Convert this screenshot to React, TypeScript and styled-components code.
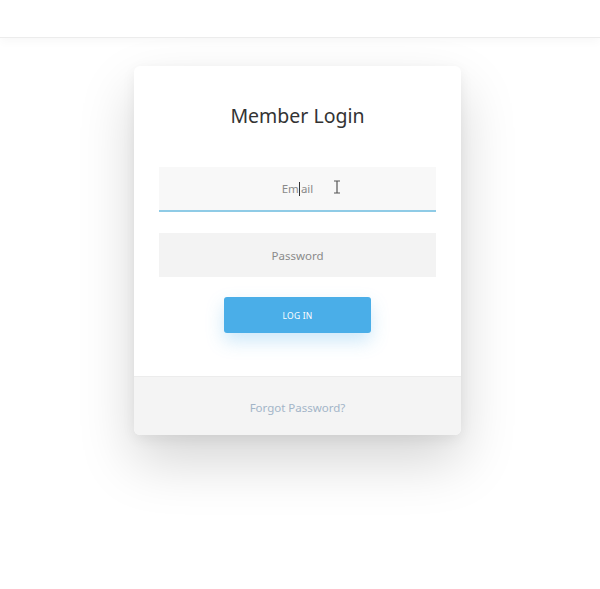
import React from "react";
import styled, { createGlobalStyle } from "styled-components";

const Global = createGlobalStyle`
  html, body { margin: 0; padding: 0; background: #ffffff; }
  body { font-family: "Noto Sans", "Open Sans", sans-serif; }
  * { box-sizing: border-box; }
`;

const Page = styled.div`
  width: 600px;
  height: 589px;
  background: #ffffff;
  overflow: hidden;
  display: flex;
  flex-direction: column;
`;

const TopBar = styled.header`
  height: 38px;
  flex-shrink: 0;
  background: #ffffff;
  border-bottom: 1px solid #ececec;
  box-shadow: 0 3px 10px rgba(0, 0, 0, 0.035);
  position: relative;
  z-index: 1;
`;

const Main = styled.main`
  display: flex;
  justify-content: center;
  padding: 28px 5px 0 0;
`;

const Card = styled.section`
  width: 327px;
  background: #ffffff;
  border-radius: 6px;
  overflow: hidden;
  box-shadow: 0 26px 55px rgba(0, 0, 0, 0.17), 0 4px 14px rgba(0, 0, 0, 0.06);
`;

const Body = styled.div`
  padding: 37px 25px 43px;
  display: flex;
  flex-direction: column;
  align-items: center;
`;

const Title = styled.h1`
  margin: 0 0 38px;
  font-family: "Noto Sans", sans-serif;
  font-weight: 400;
  font-size: 19.5px;
  line-height: 26px;
  color: #333333;
`;

const Field = styled.div<{ $focused?: boolean }>`
  position: relative;
  width: 100%;
  height: ${(p) => (p.$focused ? 45 : 44)}px;
  margin-bottom: ${(p) => (p.$focused ? 21 : 20)}px;
  background: ${(p) => (p.$focused ? "#f8f8f8" : "#f3f3f3")};
  border-bottom: ${(p) => (p.$focused ? "2px solid #8fcbe6" : "none")};
  display: flex;
  align-items: center;
  justify-content: center;
  font-size: 11.5px;
  color: #8a8a8a;
`;

const Caret = styled.span`
  display: inline-block;
  width: 1px;
  height: 14px;
  background: #333;
  vertical-align: -3px;
  margin: 0 0.5px;
`;

const Cursor = styled.svg`
  position: absolute;
  left: 174px;
  top: 13px;
`;

const Button = styled.button`
  width: 147px;
  height: 36px;
  border: none;
  border-radius: 3px;
  background: #4aaee8;
  color: #ffffff;
  font-family: "Noto Sans", sans-serif;
  font-size: 8.5px;
  letter-spacing: 0.2px;
  box-shadow: 0 8px 18px rgba(74, 174, 232, 0.28);
  cursor: pointer;
`;

const Footer = styled.footer`
  height: 59px;
  background: #f4f4f4;
  border-top: 1px solid #ececec;
  display: flex;
  align-items: center;
  justify-content: center;
`;

const Link = styled.a`
  font-size: 11.5px;
  color: #a3b5c8;
  text-decoration: none;
  margin-top: 2px;
`;

export default function App() {
  return (
    <Page>
      <Global />
      <TopBar />
      <Main>
        <Card>
          <Body>
            <Title>Member Login</Title>
            <Field $focused>
              <span>
                Em<Caret />ail
              </span>
              <Cursor width="8" height="14" viewBox="0 0 8 14">
                <path
                  d="M1 1h6M4 1v12M1 13h6"
                  stroke="#555"
                  strokeWidth="1.2"
                  fill="none"
                />
              </Cursor>
            </Field>
            <Field>Password</Field>
            <Button>LOG IN</Button>
          </Body>
          <Footer>
            <Link href="#">Forgot Password?</Link>
          </Footer>
        </Card>
      </Main>
    </Page>
  );
}
